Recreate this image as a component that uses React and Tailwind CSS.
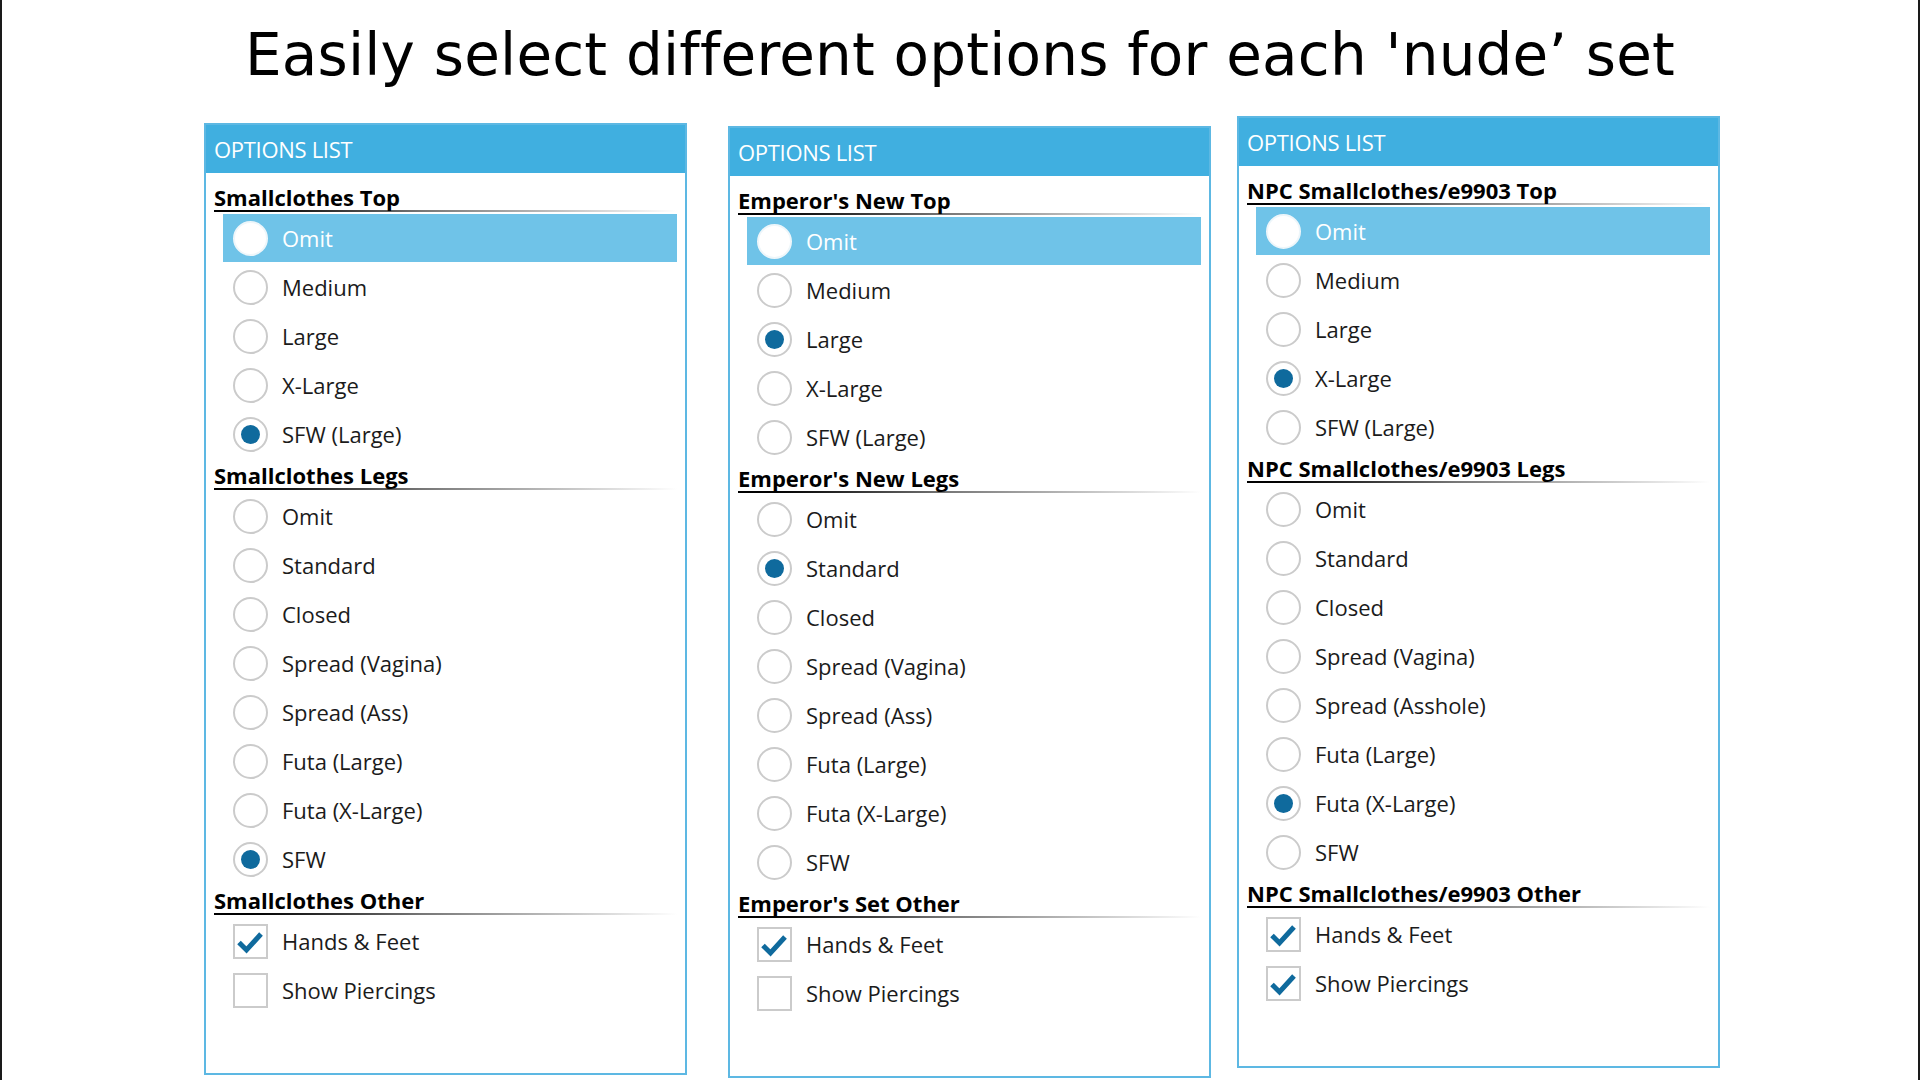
import React from 'react';

const TOPS = ['Omit', 'Medium', 'Large', 'X-Large', 'SFW (Large)'];
const LEGS = ['Omit', 'Standard', 'Closed', 'Spread (Vagina)', 'Spread (Ass)', 'Futa (Large)', 'Futa (X-Large)', 'SFW'];
const NPC_LEGS = ['Omit', 'Standard', 'Closed', 'Spread (Vagina)', 'Spread (Asshole)', 'Futa (Large)', 'Futa (X-Large)', 'SFW'];

const panels = [
  {
    offset: 'ml-[202px] mt-[7px]',
    top: { title: 'Smallclothes Top', items: TOPS, selected: 4 },
    legs: { title: 'Smallclothes Legs', items: LEGS, selected: 7 },
    other: { title: 'Smallclothes Other', checks: [true, false] },
  },
  {
    offset: 'ml-[41px] mt-[10px]',
    top: { title: "Emperor's New Top", items: TOPS, selected: 2 },
    legs: { title: "Emperor's New Legs", items: LEGS, selected: 1 },
    other: { title: "Emperor's Set Other", checks: [true, false] },
  },
  {
    offset: 'ml-[26px] mt-0',
    top: { title: 'NPC Smallclothes/e9903 Top', items: TOPS, selected: 3 },
    legs: { title: 'NPC Smallclothes/e9903 Legs', items: NPC_LEGS, selected: 6 },
    other: { title: 'NPC Smallclothes/e9903 Other', checks: [true, true] },
  },
];

const GroupHeading = ({ children }) => (
  <div className="h-[33px] pr-[8px]">
    <div className="h-[29px] leading-[33px] text-[22px] font-bold text-black whitespace-nowrap">{children}</div>
    <div className="h-[2px] bg-gradient-to-r from-black via-[#777] via-45% to-transparent" />
  </div>
);

const Radio = ({ checked, highlighted }) => (
  <div
    className={`w-[35px] h-[35px] rounded-full border-2 flex items-center justify-center bg-white ${
      highlighted ? 'border-[#eef6fa]' : 'border-[#cbcbcb]'
    }`}
  >
    {checked && <div className="w-[19px] h-[19px] rounded-full bg-[#0f6a9d]" />}
  </div>
);

const Checkbox = ({ checked }) => (
  <div className="w-[35px] h-[35px] border-2 border-[#cbcbcb] bg-white flex items-center justify-center">
    {checked && (
      <svg width="31" height="31" viewBox="0 0 31 31">
        <path d="M4 16.5 L11.5 24 L26 8" fill="none" stroke="#0f6a9d" strokeWidth="5" />
      </svg>
    )}
  </div>
);

const RadioGroup = ({ title, items, selected, highlightFirst }) => (
  <div>
    <GroupHeading>{title}</GroupHeading>
    {items.map((label, i) => {
      const highlighted = highlightFirst && i === 0;
      return (
        <div key={label} className="h-[49px] ml-[9px] mr-[8px]">
          <div
            className={`h-[48px] flex items-center pl-[10px] ${highlighted ? 'bg-[#6fc3e8] text-white' : 'text-[#1b1b1b]'}`}
          >
            <Radio checked={i === selected} highlighted={highlighted} />
            <span className="ml-[14px] text-[22px]">{label}</span>
          </div>
        </div>
      );
    })}
  </div>
);

const CheckGroup = ({ title, checks }) => (
  <div>
    <GroupHeading>{title}</GroupHeading>
    {['Hands & Feet', 'Show Piercings'].map((label, i) => (
      <div key={label} className="h-[49px] ml-[9px] mr-[8px]">
        <div className="h-[48px] flex items-center pl-[10px] text-[#1b1b1b]">
          <Checkbox checked={checks[i]} />
          <span className="ml-[14px] text-[22px]">{label}</span>
        </div>
      </div>
    ))}
  </div>
);

const OptionsPanel = ({ panel }) => (
  <div className={`w-[483px] shrink-0 border-2 border-[#5db8e3] bg-white ${panel.offset}`}>
    <div className="h-[48px] bg-[#40afe0] flex items-center pl-[8px] text-white text-[22px] tracking-[-0.3px]">
      OPTIONS LIST
    </div>
    <div className="pt-[8px] pb-[58px] pl-[8px]">
      <RadioGroup {...panel.top} highlightFirst />
      <RadioGroup {...panel.legs} />
      <CheckGroup {...panel.other} />
    </div>
  </div>
);

export default function App() {
  return (
    <div
      className="w-[1920px] h-[1080px] overflow-hidden bg-white border-x-2 border-[#1a1a1a]"
      style={{ fontFamily: '"Open Sans", "Noto Sans", sans-serif' }}
    >
      <h1
        className="pt-[23px] h-[86px] text-center text-[58px] leading-[64px] tracking-[0.2px] text-black font-normal"
        style={{ fontFamily: '"DejaVu Sans", Verdana, sans-serif' }}
      >
        Easily select different options for each 'nude’ set
      </h1>
      <div className="flex items-start mt-[30px]">
        {panels.map((p, i) => (
          <OptionsPanel key={i} panel={p} />
        ))}
      </div>
    </div>
  );
}
